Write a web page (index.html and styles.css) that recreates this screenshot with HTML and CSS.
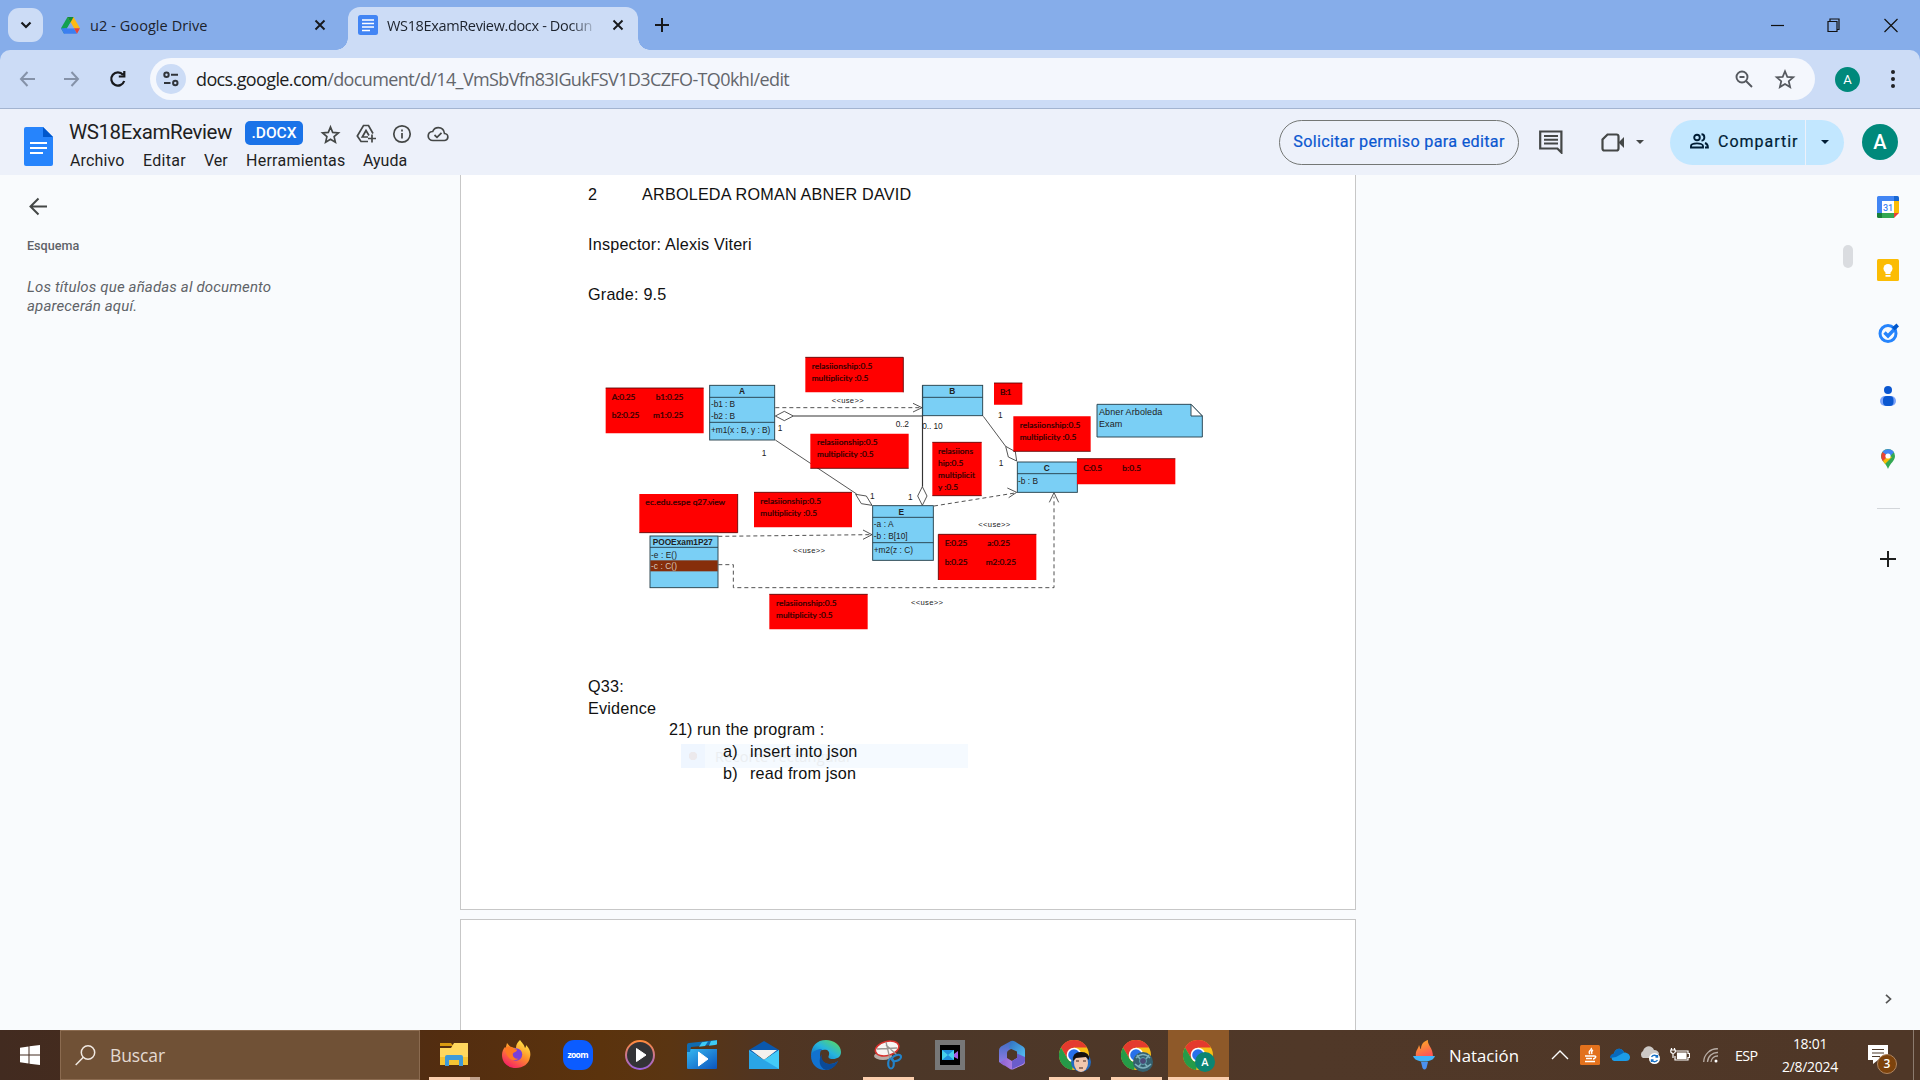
FILE: index.html
```html
<!DOCTYPE html>
<html lang="es">
<head>
<meta charset="utf-8">
<title>WS18ExamReview.docx - Documentos de Google</title>
<link rel="stylesheet" href="styles.css">
</head>
<body>
<svg class="defs" width="0" height="0">
  <defs>
    <symbol id="star" viewBox="0 0 24 24"><path d="M12 3.5l2.5 6.1 6.6.5-5 4.3 1.5 6.4-5.6-3.4-5.6 3.4 1.5-6.4-5-4.3 6.600-.5z" fill="none" stroke="currentColor" stroke-width="1.9"/></symbol>
    <symbol id="close" viewBox="0 0 12 12"><path d="M1.500 1.500l9 9m0-9l-9 9" fill="none" stroke="currentColor" stroke-width="1.900"/></symbol>
    <symbol id="caret" viewBox="0 0 8 4"><path d="M0 0h8l-4 4z" fill="currentColor"/></symbol>
    <symbol id="chrome" viewBox="0 0 30 30"><circle cx="15" cy="15" r="15" fill="#f9bf16"/><path d="M2 7.500A15 15 0 0 1 28 7.500H15l-6.500 11.300z" fill="#e43a2e"/><path d="M2 7.500l6.500 11.300A7.500 7.500 0 0 0 15 22.500L13 30A15 15 0 0 1 2 7.500z" fill="#259b48"/><circle cx="15" cy="15" r="7.300" fill="#fff"/><circle cx="15" cy="15" r="5.800" fill="#2870ea"/></symbol>
    <linearGradient id="edgeA" x1="0" y1="1" x2="1" y2="0"><stop offset="0" stop-color="#0b66c3"/><stop offset=".5" stop-color="#26b4df"/><stop offset="1" stop-color="#63e04a"/></linearGradient>
    <linearGradient id="fox" x1=".8" y1="0" x2=".2" y2="1"><stop offset="0" stop-color="#fff04a"/><stop offset=".45" stop-color="#ff9329"/><stop offset="1" stop-color="#f5156c"/></linearGradient>
    <linearGradient id="blue" x1="0" y1="0" x2="1" y2="1"><stop offset="0" stop-color="#35b8f1"/><stop offset="1" stop-color="#0b54bd"/></linearGradient>
    <linearGradient id="ring" x1="0" y1="0" x2="0" y2="1"><stop offset="0" stop-color="#ff8a3c"/><stop offset="1" stop-color="#9a62dc"/></linearGradient>
    <linearGradient id="flame" x1="0" y1="0" x2=".4" y2="1"><stop offset="0" stop-color="#ffb41f"/><stop offset="1" stop-color="#fb5a55"/></linearGradient>
    <linearGradient id="loopA" x1="0" y1="0" x2="0" y2="1"><stop offset="0" stop-color="#3f6fc4"/><stop offset="1" stop-color="#9a7be6"/></linearGradient>
    <linearGradient id="loopB" x1="0" y1="0" x2="1" y2="1"><stop offset="0" stop-color="#2f6fc0"/><stop offset="1" stop-color="#56c4f6"/></linearGradient>
    <linearGradient id="loopC" x1="0" y1="0" x2="1" y2="0"><stop offset="0" stop-color="#8c5fd0"/><stop offset="1" stop-color="#c79af0"/></linearGradient>
  </defs>
</svg>

<div class="chrome-top">
<div class="tabstrip">
  <div class="tab-search"><svg width="12" height="8" viewBox="0 0 12 8"><path d="M1.500 1.500L6 6l4.500-4.500" fill="none" stroke="#17191d" stroke-width="2.200"/></svg></div>
  <div class="tab idle">
    <svg width="19" height="17" viewBox="0 0 19 17"><path d="M6.500 0h6L9.500 5.500 3 16.500 0 11.300z" fill="#12a150"/><path d="M6.500 0h6L19 11.300h-6z" fill="#fdb913"/><path d="M3.200 11.300H13L16 16.700H3z" fill="#3b7ff0"/><path d="M0 11.300h6L3 16.700z" fill="#3b7ff0"/><path d="M13 11.300h6l-3 5.400z" fill="#ea4335"/><path d="M9.500 5.500L6.200 11.300H12.900z" fill="#84aae8"/><path d="M6.500 0h6l-3 5.500z" fill="#118a3e"/></svg>
    <span class="tab-title t-drive">u2 - Google Drive</span>
    <svg class="x" width="12" height="12"><use href="#close"/></svg>
  </div>
  <div class="tab active">
    <svg width="20" height="20" viewBox="0 0 20 20"><rect width="20" height="20" rx="2.500" fill="#4285f4"/><path d="M4 5h12M4 8.500h12M4 12h12M4 15.500h8" stroke="#fff" stroke-width="1.700"/></svg>
    <span class="tab-title t-docs">WS18ExamReview.docx - Docun</span>
    <svg class="x" width="12" height="12"><use href="#close"/></svg>
  </div>
  <svg class="newtab" width="14" height="14" viewBox="0 0 14 14"><path d="M7 0v14M0 7h14" stroke="#17191d" stroke-width="2"/></svg>
  <svg class="winctl" width="128" height="15" viewBox="0 0 128 15" fill="none" stroke="#111" stroke-width="1.200"><path d="M0 7.500h13"/><path d="M57 3.500h9v10h-9zM59 3.500V1h9v10.500h-2"/><path d="M113.500 1l13 13m0-13l-13 13"/></svg>
</div>

<div class="toolbar">
  <svg class="nav" width="108" height="18" viewBox="0 0 108 18" fill="none" stroke-width="2"><path d="M16 9H2m6.500-7L2 9l6.500 7" stroke="#8592a8"/><path d="M45 9h14m-6.500-7L59 9l-6.500 7" stroke="#8592a8"/><path d="M104 4.800A6.600 6.600 0 1 0 105.200 11M105.300 1v5.500h-5.500" stroke="#17191d" stroke-width="2.200"/></svg>
  <div class="omnibox">
    <div class="site"><svg width="16" height="16" viewBox="0 0 16 16" fill="none" stroke="#30343a" stroke-width="2"><circle cx="3.500" cy="3.800" r="2.200"/><path d="M8 3.800h7M1 12h6.500"/><circle cx="12.300" cy="12" r="2.200"/></svg></div>
    <div class="url"><b>docs.google.com</b>/document/d/14_VmSbVfn83IGukFSV1D3CZFO-TQ0khI/edit</div>
    <svg class="zoomout" width="18" height="18" viewBox="0 0 18 18" fill="none" stroke="#55595f" stroke-width="1.900"><circle cx="7" cy="7" r="5.500"/><path d="M11 11l6 6M4.500 7h5"/></svg>
    <svg class="bm" width="22" height="22"><use href="#star"/></svg>
  </div>
  <div class="avatar sm">A</div>
  <svg class="dots" width="4" height="18" viewBox="0 0 4 18" fill="#202124"><circle cx="2" cy="2" r="2"/><circle cx="2" cy="9" r="2"/><circle cx="2" cy="16" r="2"/></svg>
</div>
</div>

<header class="docs-header">
  <svg class="logo" width="29" height="39" viewBox="0 0 29 39"><path d="M2 0h17l10 10v27a2 2 0 0 1-2 2H2a2 2 0 0 1-2-2V2a2 2 0 0 1 2-2z" fill="#2684fc"/><path d="M19 0l10 10H19z" fill="#0057cc"/><path d="M6 16h17M6 21h17M6 26h13" stroke="#fff" stroke-width="1.900"/></svg>
  <div class="titles">
    <div class="title-row">
      <span class="doc-title">WS18ExamReview</span><span class="badge">.DOCX</span>
      <svg width="21" height="21"><use href="#star"/></svg>
      <svg width="21" height="20" viewBox="0 0 21 20" fill="none" stroke="#444746" stroke-width="1.700"><path d="M12 17.500H5L1.300 12 7.500 1.500h5l4.500 8"/><path d="M12 13H6.300L10 6.500l3 5"/><path d="M16 10.500v8M12 14.500h8"/></svg>
      <svg width="20" height="20" viewBox="0 0 20 20" fill="none" stroke="#444746" stroke-width="1.700"><circle cx="10" cy="10" r="8.200"/><path d="M10 9v5.500M10 5.500v2"/></svg>
      <svg width="22" height="20" viewBox="0 0 22 20" fill="none" stroke="#444746" stroke-width="1.700"><path d="M6 16.500h11.200a3.500 3.500 0 0 0 .3-7C17 6 14.500 3.700 11.300 3.700 8.700 3.700 6.700 5.200 5.700 7.500 3 7.700 1.200 9.700 1.200 12c0 2.500 2 4.500 4.800 4.500z"/><path d="M7.500 11l2.500 2.300 4.500-4.500"/></svg>
    </div>
    <nav class="menu"><span class="m1">Archivo</span><span class="m2">Editar</span><span class="m3">Ver</span><span class="m4">Herramientas</span><span>Ayuda</span></nav>
  </div>
  <div class="request">Solicitar permiso para editar</div>
  <svg class="comment" width="24" height="24" viewBox="0 0 24 24"><path d="M1.200 1.500h21.200v21l-4-4H1.200z" fill="none" stroke="#444746" stroke-width="2.200"/><path d="M5 6h14M5 9.700h14M5 13.500h14" stroke="#444746" stroke-width="2"/></svg>
  <svg class="video" width="24" height="19" viewBox="0 0 24 19"><path d="M6.500 1.500h9q2 0 2 2v12q0 2-2 2h-12q-2 0-2-2v-9z" fill="none" stroke="#444746" stroke-width="2.200"/><path d="M17.500 9.500L23 4v11z" fill="#444746"/></svg>
  <svg class="vcaret" width="8" height="4"><use href="#caret"/></svg>
  <div class="share">
    <div class="share-main"><svg width="19" height="16" viewBox="0 0 19 16" fill="none" stroke="#001d35" stroke-width="1.900"><circle cx="7" cy="4.500" r="2.800"/><path d="M1 14.500v-1.500c0-3.500 12-3.500 12 0v1.500z"/><path d="M11.500 1.300c3.800 0 3.800 6.300 0 6.300M15 10c2 .8 2.900 2 2.900 4.500H15"/></svg><span>Compartir</span></div>
    <div class="share-more"><svg width="8" height="4"><use href="#caret"/></svg></div>
  </div>
  <div class="avatar lg">A</div>
</header>

<main>
  <aside class="outline">
    <svg width="19" height="19" viewBox="0 0 19 19" fill="none" stroke="#444746" stroke-width="2"><path d="M18 9.500H1.500M9.500 1.500l-8 8 8 8"/></svg>
    <h2>Esquema</h2>
    <p>Los títulos que añadas al documento<br>aparecerán aquí.</p>
  </aside>

  <section class="canvas">
    <article class="page first">
      <div class="ghost"><i></i><span>Recorte rectangular</span></div>
      <p class="name"><span>2</span>ARBOLEDA ROMAN ABNER DAVID</p>
      <p class="gap">Inspector: Alexis Viteri</p>
      <p class="gap">Grade: 9.5</p>
      <svg class="diagram" width="660" height="300" viewBox="0 0 1980 900">
        <g class="solid">
          <path d="M640 228H1028" class="grey"/><path d="M586 300L830 462M1210 229L1277 319"/>
          <path d="M1027.500 136V440" stroke-width="3.500"/>
          <path d="M586 228l27-14 27 14-27 14zM1027 440l14 28-14 28-14-28zM827 463l32 5 17 28-32-5zM1277 319l29 16 4 28-25-12z" fill="#fff"/>
        </g>
        <g class="dash"><path d="M586 203H1020M415 589L870 584M415 674H460V743H1422V470M1062 498L1305 459"/></g>
        <g class="solid"><path d="M999 190l27 13-27 13M849 570l27 14-27 14M1282 444l28 13-24 16M1408 487l14-29 14 29"/></g>
        <g class="box">
          <rect x="389" y="136" width="195" height="164"/><path d="M389 172H584M389 247H584"/>
          <rect x="1028" y="136" width="180" height="91"/><path d="M1028 172H1208"/>
          <rect x="1312" y="366" width="180" height="91"/><path d="M1312 401H1492"/>
          <rect x="878" y="497" width="182" height="164"/><path d="M878 532H1060M878 608H1060"/>
          <rect x="210" y="588" width="204" height="155"/><path d="M210 622H414"/>
          <path d="M1551 193H1833L1867 228V291H1551z"/><path d="M1833 193V228H1867z" fill="#fff"/>
        </g>
        <rect x="211" y="661" width="202" height="33" fill="#862e0b"/>
        <g class="red">
          <path d="M77 144h294v136H77zM676 52h294v105H676zM691 281h295v104H691zM522 457h294v105H522zM178 462h295v116H178zM568 763h295v105H568zM1057 307h148v160h-148zM1242 129h85v65h-85zM1300 229h232v105h-232zM1491 356h295v77h-295zM1075 583h294v137h-294z"/>
          <path class="edge" d="M77 144h294M676 52h294v105M691 385h295M522 457h294M178 578h295v-116M568 763h295M1057 307h148M1057 467h148M1242 129h85M1300 334h232M1491 356h295M1075 720V583h294"/>
        </g>
        <g class="uml">
          <text x="486" y="163" class="b">A</text><text x="393" y="202" textLength="72">-b1 : B</text><text x="393" y="236" textLength="72">-b2 : B</text><text x="393" y="279" textLength="178">+m1(x : B, y : B)</text>
          <text x="1117" y="162" class="b">B</text><text x="1400" y="392" class="b">C</text><text x="1314" y="431" textLength="60">-b : B</text>
          <text x="964" y="524" class="b">E</text><text x="881" y="562" textLength="60">-a : A</text><text x="881" y="597" textLength="102">-b : B[10]</text><text x="881" y="640" textLength="118">+m2(z : C)</text>
          <text x="308" y="615" class="b" textLength="180">POOExam1P27</text><text x="213" y="654" textLength="78">-e : E()</text><text x="213" y="688" textLength="78" class="pale">-c : C()</text>
          <text x="1557" y="226" textLength="190" class="note">Abner Arboleda</text><text x="1557" y="262" textLength="70" class="note">Exam</text>
          <text x="593" y="272">1</text><text x="545" y="347">1</text><text x="870" y="476">1</text><text x="984" y="480">1</text><text x="1254" y="233">1</text><text x="1256" y="379">1</text>
          <text x="947" y="262" textLength="40">0..2</text><text x="1027" y="267" textLength="61">0.. 10</text>
          <g class="use"><text x="755" y="190" textLength="96">&lt;&lt;use&gt;&gt;</text><text x="639" y="640" textLength="96">&lt;&lt;use&gt;&gt;</text><text x="1195" y="560" textLength="96">&lt;&lt;use&gt;&gt;</text><text x="993" y="795" textLength="96">&lt;&lt;use&gt;&gt;</text></g>
        </g>
        <g class="score">
          <text x="95" y="179" textLength="71">A:0.25</text><text x="227" y="179" textLength="83">b1:0.25</text><text x="95" y="234" textLength="83">b2:0.25</text><text x="219" y="234" textLength="91">m1:0.25</text>
          <text x="695" y="88" textLength="182">relasiionship:0.5</text><text x="695" y="124" textLength="170">multiplicity :0.5</text>
          <text x="711" y="316" textLength="182">relasiionship:0.5</text><text x="711" y="352" textLength="170">multiplicity :0.5</text>
          <text x="541" y="492" textLength="182">relasiionship:0.5</text><text x="541" y="528" textLength="170">multiplicity :0.5</text>
          <text x="588" y="798" textLength="182">relasiionship:0.5</text><text x="588" y="834" textLength="170">multiplicity :0.5</text>
          <text x="1319" y="265" textLength="182">relasiionship:0.5</text><text x="1319" y="300" textLength="170">multiplicity :0.5</text>
          <text x="196" y="496" textLength="135">ec.edu.espe</text><text x="338" y="496" textLength="97">q27.view</text>
          <text x="1074" y="342" textLength="105">relasiions</text><text x="1074" y="378" textLength="76">hip:0.5</text><text x="1074" y="414" textLength="111">multiplicit</text><text x="1074" y="449" textLength="60">y :0.5</text>
          <text x="1260" y="165" textLength="34">B:1</text><text x="1510" y="392" textLength="56">C:0.5</text><text x="1627" y="392" textLength="56">b:0.5</text>
          <text x="1094" y="619" textLength="68">E:0.25</text><text x="1222" y="619" textLength="68">a:0.25</text><text x="1094" y="674" textLength="69">b:0.25</text><text x="1217" y="674" textLength="91">m2:0.25</text>
        </g>
      </svg>
      <p>Q33:</p>
      <p>Evidence</p>
      <p class="li1"><span>21)</span>run the program :</p>
      <p class="li2"><span>a)</span>insert into json</p>
      <p class="li2"><span>b)</span>read from json</p>
    </article>
    <article class="page second"></article>
  </section>

  <div class="scroll"><div class="thumb"></div></div>

  <aside class="rail">
    <svg width="22" height="22" viewBox="0 0 22 22"><rect width="22" height="22" rx="1.500" fill="#fff"/><path d="M0 1.500Q0 0 1.500 0H17v5H5v12H0z" fill="#4285f4"/><path d="M17 0h3.500Q22 0 22 1.500V5h-5z" fill="#1967d2"/><path d="M17 5h5v12h-5z" fill="#fbbc04"/><path d="M5 17h12v5H5z" fill="#34a853"/><path d="M0 17h5v5H1.500Q0 22 0 20.500z" fill="#188038"/><path d="M17 17h5l-5 5z" fill="#ea4335"/><text x="11" y="14.800" text-anchor="middle" class="cal">31</text></svg>
    <svg width="22" height="22" viewBox="0 0 22 22"><rect width="22" height="22" rx="1.500" fill="#fbbc04"/><circle cx="11" cy="9.500" r="4.500" fill="#fff"/><path d="M8.500 12h5v3h-5zM8.500 16h5v1.800h-5z" fill="#fff"/></svg>
    <svg width="22" height="22" viewBox="0 0 22 22"><circle cx="11" cy="11.500" r="8" fill="none" stroke="#2684fc" stroke-width="3"/><path d="M7.500 10.500l3.500 3.500 8-8.500" fill="none" stroke="#2684fc" stroke-width="3.400"/><path d="M15 5.500l4.500-4 2.500 3-4.500 4z" fill="#0057cc"/></svg>
    <svg width="22" height="22" viewBox="0 0 22 22"><circle cx="11" cy="5" r="4" fill="#0b57d0"/><rect x="3" y="11" width="16" height="10" rx="5" fill="#7ba3fa"/><rect x="6" y="11" width="10.500" height="10" rx="4" fill="#0b57d0"/></svg>
    <svg width="22" height="22" viewBox="0 0 22 22"><path d="M4 8a7 7 0 0 1 14 0c0 5-5 7-7 13C9 15 4 13 4 8z" fill="#34a853"/><path d="M5.500 4A7 7 0 0 1 17 4.300L8 13z" fill="#4285f4"/><path d="M5.500 4L11 8l-5 5.500C4 10.500 3.500 7 5.500 4z" fill="#ea4335"/><path d="M11 8l4 1-7 7-2-3z" fill="#fbbc04"/><circle cx="11" cy="8" r="2.600" fill="#fff"/></svg>
    <hr>
    <svg width="16" height="16" viewBox="0 0 16 16"><path d="M8 0v16M0 8h16" stroke="#1f1f1f" stroke-width="2"/></svg>
    <svg class="collapse" width="7" height="10" viewBox="0 0 7 10"><path d="M1 .8L5.500 5 1 9.200" fill="none" stroke="#555" stroke-width="1.700"/></svg>
  </aside>
</main>

<footer class="taskbar">
  <div class="start"><svg width="20" height="20" viewBox="0 0 20 20" fill="#fff"><path d="M0 2.700l8.500-1.200v8H0zM9.500 1.300L20 0v9.500H9.500zM0 10.500h8.500v8L0 17.300zM9.500 10.500H20V20L9.500 18.700z"/></svg></div>
  <div class="search"><svg width="21" height="21" viewBox="0 0 21 21" fill="none" stroke="#f1e9e2" stroke-width="1.500"><circle cx="13" cy="7.500" r="6.700"/><path d="M8.300 12.300L.7 20"/></svg><span>Buscar</span></div>
  <div class="apps">
    <div class="app open multi"><svg width="30" height="30" viewBox="0 0 30 30"><path d="M1 3h11l2.500 3H1z" fill="#d99a10"/><path d="M1 8h11l3-5h14v22H1z" fill="#ffd75e"/><path d="M1 17h28v8H1z" fill="#f5c433"/><path d="M6 26V17q0-2 2-2h14q2 0 2 2v9h-4v-6H10v6z" fill="#3e9ad9"/></svg></div>
    <div class="app"><svg width="30" height="30" viewBox="0 0 30 30"><path d="M19 0c2 3 4 4 5 8 1-1 1-2 1-3 4 4 5 8 4 12-1 7-7 11-14 11C7 28 1 23 1 15c0-3 1-6 3-8l.5 1.500L6 3l4 4.500 5 .5c0-4 2-6 4-8z" fill="url(#fox)"/><circle cx="15" cy="14.500" r="6.200" fill="#7a40d8"/><path d="M4 8c3-2 7-2 9 1l3 .5c0 3-3 2-4 4-1 3 2 6 6 5-6 4-13 0-14-10.500z" fill="#ff7a22"/></svg></div>
    <div class="app"><svg width="30" height="30" viewBox="0 0 30 30"><rect width="30" height="30" rx="11" fill="#0b5cff"/><text x="15" y="17.500" text-anchor="middle" class="zoomtxt" textLength="21">zoom</text></svg></div>
    <div class="app"><svg width="30" height="30" viewBox="0 0 30 30"><circle cx="15" cy="15" r="14" fill="#333336" stroke="url(#ring)" stroke-width="2"/><path d="M11.500 8.500L21 15l-9.500 6.500z" fill="#fff" stroke="#fff" stroke-linejoin="round"/></svg></div>
    <div class="app"><svg width="30" height="30" viewBox="0 0 30 30"><path d="M0 9h30v19q0 1-1 1H1q-1 0-1-1z" fill="url(#blue)"/><path d="M0 5q0-2 2-2L30 0v4.500L4 7l-1 5H0z" fill="#0f6bb0"/><path d="M15 2.300l6-.8-3 4.500-6 .8zM24 1l6-.8v4L28 5l-6 .8z" fill="#3ecbf5"/><path d="M11.500 12l9.500 7-9.500 7z" fill="#fff" stroke="#fff" stroke-linejoin="round"/></svg></div>
    <div class="app"><svg width="30" height="30" viewBox="0 0 30 30"><path d="M0 10L15 1l15 9v5H0z" fill="#0a58ad"/><path d="M2 10h26l-13 10z" fill="#f3f1ee"/><path d="M0 10l15 10L30 10v19H0z" fill="#35b2ee"/><path d="M15 20L30 29V10z" fill="#43cbf8"/><path d="M13 18.700l2 1.300L30 29H0V12z" fill="#209ae0" opacity=".55"/></svg></div>
    <div class="app"><svg width="30" height="30" viewBox="0 0 30 30"><path d="M0 16C0 6 6 0 15 0c8 0 15 5 15 12 0 5-4 7-8 7-5 0-5-2-4-4 1-4-2-6-6-5C6 10 2 13 0 16z" fill="url(#edgeA)"/><path d="M0 16C1 11 6 9 11 9c-4 4-2 14 6 15 4 .5 7-1 10-3-3 6-8 9-13 9C6 30 0 24 0 16z" fill="#1272cf"/><path d="M11 14c-2 6 3 10 8 10 4 0 6-2 8-3-2 6-8 9-12 9-7-2-8-11-4-16z" fill="#0a4a98"/></svg></div>
    <div class="app open"><svg width="30" height="30" viewBox="0 0 30 30"><ellipse cx="10" cy="16" rx="9" ry="4" fill="#b5aca6"/><ellipse cx="14" cy="8.500" rx="12" ry="7" transform="rotate(-15 14 8)" fill="#f8f5f3" stroke="#d9322e" stroke-width="1.600"/><path d="M4 9l20-1M13 2l4 17M24 15L13 5" stroke="#9b9693" stroke-width="1.300"/><g fill="none" stroke="#2383c9" stroke-width="2.200"><ellipse cx="23.500" cy="18" rx="2.800" ry="4.800" transform="rotate(65 23.500 18)"/><ellipse cx="18" cy="23.500" rx="2.800" ry="5"/></g></svg></div>
    <div class="app"><svg width="30" height="30" viewBox="0 0 30 30"><rect width="30" height="30" fill="#777"/><rect x="5" y="5" width="20" height="20" fill="#000"/><path d="M7 10h12v10H7z" fill="#1f8fdc"/><path d="M7 10l6 5 6-5v10l-6-5-6 5z" fill="#46d1ec"/><path d="M19 14l4-3v8l-4-2z" fill="#a45fe8"/></svg></div>
    <div class="app"><svg width="30" height="30" viewBox="0 0 30 30"><path d="M14 1L4 6.500Q2 8 2 10v12l5 3.500 3-1.500v-11q0-2 2-3l3-1.500V1z" fill="url(#loopA)"/><path d="M14 1q2-.5 4 .5l8 5q2 1 2 3.500v9l-8-4.500v-3L12 8z" fill="url(#loopB)"/><path d="M3 22.500l7-4.500 5 3 5-3 8 1v3q0 2-2 3l-9 4q-2 1-4 0z" fill="url(#loopC)"/><path d="M20 13.500l8 3.500v4q0 2-2 3l-11 5v-8l5-3z" fill="#6a5ccb"/></svg></div>
    <div class="app open"><svg width="32" height="32" viewBox="0 0 32 32"><use href="#chrome" width="30" height="30"/><circle cx="22" cy="22" r="10" fill="#236bc0"/><ellipse cx="22" cy="23" rx="7" ry="9" fill="#f0c7ae"/><path d="M14 21q-1-9 8-9t8 8l-3-3-10 1z" fill="#16110f"/><path d="M17 21h3M24 21h3M20 28h4" stroke="#40251c" stroke-width="1.200"/></svg></div>
    <div class="app open"><svg width="32" height="32" viewBox="0 0 32 32"><use href="#chrome" width="30" height="30"/><circle cx="22" cy="22" r="10" fill="#35606f"/><path d="M15 18q7-7 14 0M14 24q8 8 16 0M16 15l3 4M28 15l-3 4M17 27l3-3M27 27l-3-3" fill="none" stroke="#7eb1bd" stroke-width="1.500"/><circle cx="22" cy="21" r="3.500" fill="#4c4b78" stroke="#5aa4ab"/></svg></div>
    <div class="app open current"><svg width="32" height="32" viewBox="0 0 32 32"><use href="#chrome" width="30" height="30"/><circle cx="22" cy="22" r="10" fill="#0a8573"/><text x="22" y="26" text-anchor="middle" class="profile">A</text></svg></div>
  </div>
  <div class="weather"><svg width="22" height="30" viewBox="0 0 22 30"><path d="M3 17C2 10 5 10 6 5c1 2 1 4 2 4 0-5 3-8 7-9-1 5 5 7 5 17z" fill="url(#flame)"/><path d="M0 16h22q-1 4-8 5.500H8Q1 20 0 16z" fill="#42b4fa"/><path d="M8 22h7l-1.500 6q-2 3-4 0z" fill="#4b91ef"/></svg><span>Natación</span></div>
  <div class="tray">
    <svg width="18" height="10" viewBox="0 0 18 10"><path d="M1 9l8-8 8 8" fill="none" stroke="#fff" stroke-width="1.400"/></svg>
    <svg class="java" width="20" height="20" viewBox="0 0 20 20"><rect width="20" height="20" rx="1.500" fill="#e2711d"/><path d="M11 3c2 2-4 3-1 6M13 5c-2 1-2 2-1 4M5 11h9q3 0 1 2-1 1-2 1M6 13.500h6M5 16.500h10" fill="none" stroke="#fff" stroke-width="1.400"/></svg>
    <svg width="20" height="14" viewBox="0 0 20 14"><path d="M4 13a4 4 0 0 1 0-7.500C5 0 12-1 14 4.500c4 0 6 2.500 6 5S18 13 16 13z" fill="#1b9ce8"/><path d="M4 5.500C5 0 12-1 14 4.500L6 9 0 10q0-4 4-4.500z" fill="#0869bc"/></svg>
    <svg class="sync" width="20" height="18" viewBox="0 0 20 18"><path d="M3 12a4 4 0 0 1 0-7C5-1 12-1 14 4c3 0 5 2 5 4l-5 4z" fill="#cdc9c6"/><circle cx="14.500" cy="12.500" r="5.500" fill="#fff"/><path d="M11.500 11a3.500 3.500 0 0 1 6 0m0-2v2h-2M17.500 14a3.500 3.500 0 0 1-6 0m0 2v-2h2" fill="none" stroke="#1771c6" stroke-width="1.400"/></svg>
    <svg width="20" height="14" viewBox="0 0 20 14" fill="none" stroke="#fff" stroke-width="1.200"><path d="M6 3h12v2.500h1.500v4H18V12H5V8"/><path d="M7.500 5h8.500v5.500H7.500z" fill="#fff"/><path d="M1.500 0v2M4.500 0v2M.8 2h4.500v2q-2 3-4.500 0zM3 6v4"/></svg>
    <svg class="wifi" width="15" height="15" viewBox="0 0 15 15" fill="none" stroke="#b9aea6" stroke-width="1.300"><path d="M.7 14A13.500 13.500 0 0 1 15 .8M4.500 14A10 10 0 0 1 15 4.500M8 14a6.500 6.500 0 0 1 7-6"/><circle cx="13" cy="13" r="1.500" fill="#fff" stroke="none"/></svg>
    <span class="lang">ESP</span>
  </div>
  <div class="clock"><span>18:01</span><span>2/8/2024</span></div>
  <div class="notif"><svg width="20" height="20" viewBox="0 0 20 20"><path d="M0 0h20v15H10l-5 4v-4H0z" fill="#fff"/><path d="M4 4.500h12M4 8h12M4 11.500h8" stroke="#4c3829" stroke-width="1.200"/></svg><span>3</span></div>
  <div class="peek"></div>
</footer>
</body>
</html>
```
FILE: styles.css
```css
* { box-sizing: border-box; }
body { margin: 0; width: 1920px; height: 1080px; overflow: hidden; display: flex; flex-direction: column; font-family: Roboto, sans-serif; color: #1f1f1f; background: #f9fbfd; }
svg { flex: none; display: block; }
.defs { position: absolute; }
p, h2 { margin: 0; }
span { white-space: pre; }

/* browser tabs */
.chrome-top { flex: none; background: #86adea; }
.tabstrip { height: 50px; display: flex; align-items: center; padding-left: 8px; font-family: "Open Sans", sans-serif; }
.tab-search { width: 35px; height: 34px; border-radius: 11px; background: #ccdcf6; display: flex; align-items: center; justify-content: center; }
.tab { display: flex; align-items: center; font-size: 14.500px; color: #1c222c; }
.tab .x { margin-left: auto; color: #17191d; }
.idle { width: 293px; padding: 0 10px 0 18px; margin-right: 12px; }
.tab-title { margin-left: 10px; overflow: hidden; }
.t-drive { letter-spacing: .07px; }
.active { position: relative; align-self: flex-end; width: 290px; height: 43px; padding: 0 14px 7px 10px; background: #ccdcf6; border-radius: 12px 12px 0 0; }
.active::before, .active::after { content: ""; position: absolute; bottom: 0; width: 12px; height: 12px; }
.active::before { left: -12px; background: radial-gradient(circle at 0 0, transparent 11.500px, #ccdcf6 12px); }
.active::after { right: -12px; background: radial-gradient(circle at 100% 0, transparent 11.500px, #ccdcf6 12px); }
.t-docs { width: 209px; margin-left: 9px; letter-spacing: -.35px; -webkit-mask-image: linear-gradient(90deg, #000 88%, transparent 101%); }
.newtab { margin-left: 17px; }
.winctl { margin: 0 21px 0 auto; }

/* address bar */
.toolbar { height: 59px; display: flex; align-items: center; background: #ccdcf6; border-bottom: 1px solid #a3b4d0; border-radius: 10px 10px 0 0; padding-left: 19px; }
.omnibox { width: 1665px; height: 42px; margin-left: 23px; border-radius: 21px; background: #f4f7fd; display: flex; align-items: center; padding: 0 19px 0 6px; }
.site { width: 30px; height: 30px; border-radius: 50%; background: #ccdcf6; display: flex; align-items: center; justify-content: center; }
.url { margin-left: 10px; font: 18px "Open Sans", sans-serif; letter-spacing: -.62px; color: #63666c; white-space: nowrap; }
.url b { font-weight: 400; color: #1c1e22; }
.zoomout { margin-left: auto; }
.bm { margin-left: 21px; color: #55595f; }
.avatar { border-radius: 50%; background: #00897b; color: #fff; display: flex; align-items: center; justify-content: center; }
.sm { width: 25px; height: 25px; margin-left: 20px; font-size: 13px; }
.dots { margin-left: 31px; }

/* document header */
.docs-header { height: 66px; flex: none; display: flex; align-items: center; background: #edf1fa; padding-left: 24px; }
.logo { margin-top: 8px; }
.titles { margin-left: 16px; width: 1210px; height: 66px; padding-top: 9px; }
.title-row { display: flex; align-items: center; height: 30px; color: #444746; }
.doc-title { width: 176px; margin-top: -2px; font-size: 20.500px; color: #1f1f1f; letter-spacing: -.42px; }
.badge { width: 58px; height: 24px; margin: -1px 17px 0 0; border-radius: 5px; background: #1a73e8; color: #fff; font-size: 15.500px; font-weight: 500; display: flex; align-items: center; justify-content: center; }
.title-row svg { margin-top: 2px; }
.title-row svg + svg { margin-left: 15px; }
.menu { display: flex; font-size: 16px; line-height: 22px; margin: 2px 0 0 1px; }
.menu .m1 { width: 73px; letter-spacing: .15px; } .menu .m2 { width: 61px; letter-spacing: .3px; } .menu .m3 { width: 42px; } .menu .m4 { width: 117px; letter-spacing: .25px; }
.request { width: 240px; height: 45px; padding-bottom: 2px; border: 1px solid #747775; border-radius: 23px; color: #0b57d0; font-size: 16.200px; letter-spacing: .3px; -webkit-text-stroke: .2px #0b57d0; display: flex; align-items: center; justify-content: center; white-space: nowrap; }
.comment { margin-left: 20px; }
.video { margin-left: 38px; }
.vcaret { margin-left: 11px; color: #444746; }
.share { display: flex; margin-left: 26px; height: 45px; color: #001d35; font-size: 16px; }
.share-main { width: 135px; padding-bottom: 2px; background: #c2e7ff; border-radius: 23px 0 0 23px; display: flex; align-items: center; padding-left: 20px; gap: 9px; letter-spacing: .98px; -webkit-text-stroke: .2px #001d35; }
.share-more { width: 38px; margin-left: 1px; background: #c2e7ff; border-radius: 0 23px 23px 0; display: flex; align-items: center; justify-content: center; }
.lg { width: 36px; height: 36px; margin-left: 18px; font-size: 20px; font-weight: 500; }

/* editor */
main { height: 855px; flex: none; display: flex; background: #f9fbfd; }
.outline { width: 460px; flex: none; padding: 22px 0 0 27px; color: #5f6368; }
.outline svg { margin-left: 2px; }
.outline h2 { margin-top: 21px; font-size: 12.600px; line-height: 18px; font-weight: 500; }
.outline p { margin-top: 22px; font-size: 15px; line-height: 19px; font-style: italic; letter-spacing: .15px; padding-top: 1px; }
.canvas { width: 1383px; flex: none; }
.page { position: relative; width: 896px; background: #fff; border: 1px solid #c7c7c7; }
.first { height: 735px; border-top: 0; padding: 8px 0 0 127px; font: 16.200px/21.700px "Liberation Sans", Arial, sans-serif; letter-spacing: .2px; color: #111; }
.first p { position: relative; }
.second { height: 111px; margin-top: 9px; border-bottom: 0; }
.name { display: flex; line-height: 22px; }
.name span { width: 54px; }
.gap { margin-top: 28px; line-height: 22px; }
.diagram { margin: 35px 0 36px -8px; letter-spacing: 0; }
.li1 { display: flex; padding-left: 81px; } .li1 span { width: 28px; letter-spacing: 0; }
.li2 { display: flex; padding-left: 135px; } .li2 span { width: 27px; }
.ghost { position: absolute; left: 220px; top: 569px; width: 287px; height: 24px; background: #f5faff; display: flex; align-items: center; font: 14.500px "Open Sans", sans-serif; color: #ebeef1; }
.ghost i { width: 24px; height: 24px; background: radial-gradient(circle, #ece9ec 4px, #eff6ff 4.500px); margin-right: 10px; }
.solid { fill: none; stroke: #333; stroke-width: 2.500; }
.grey { stroke: #777; stroke-width: 4; }
.dash { fill: none; stroke: #444; stroke-width: 2.800; stroke-dasharray: 12 9; }
.box { fill: #7acff5; stroke: #27414c; stroke-width: 2.800; }
.red { fill: #f00; }
.red .edge { fill: none; stroke: #500; stroke-width: 2.500; }
.uml { font-family: "Liberation Sans", Arial, sans-serif; font-size: 25px; fill: #222; }
.uml .b { font-weight: 700; text-anchor: middle; }
.uml .pale { fill: #d5c8bf; }
.uml .note { font-size: 27px; }
.uml .use { font-size: 23px; }
.score { font-family: Lato, sans-serif; font-size: 25px; fill: #2c0000; stroke: #2c0000; stroke-width: .7; }
.scroll { width: 10px; flex: none; padding-top: 70px; }
.thumb { height: 23px; border-radius: 5px; background: #dadce0; }
.rail { width: 67px; flex: none; padding: 21px 0 26px 3px; display: flex; flex-direction: column; align-items: center; gap: 41px; }
.rail hr { width: 23px; height: 1px; margin: -3px 0 1px; border: 0; background: #d3d6da; }
.rail .collapse { margin-top: auto; }
.cal { font: 500 9px Roboto, sans-serif; fill: #4285f4; }

/* Windows taskbar */
.taskbar { height: 50px; flex: none; display: flex; align-items: center; color: #fff; font-family: "Open Sans", "Noto Sans", sans-serif; background: linear-gradient(90deg, #422b20 0, #4b2d1a 320px, #532d10 440px, #5b330d 600px, #5a3512 670px, #513521 760px, #4c3728 900px, #503828 1300px, #4f3727 1900px); }
.start { width: 60px; padding-left: 20px; }
.search { width: 360px; height: 50px; border: 1px solid #8b6b50; background: #705136; display: flex; align-items: center; padding-left: 14px; font-size: 17.500px; color: #e4dad2; }
.search span { margin-left: 14px; letter-spacing: -.1px; }
.apps { display: flex; margin-left: 3px; }
.app { width: 62px; height: 50px; display: flex; align-items: center; justify-content: center; }
.app.open { background: linear-gradient(#fbcfae, #fbcfae) 50% 100% / 51px 3px no-repeat; }
.app.multi { background: linear-gradient(90deg, #fbcfae 41px, #c0a18b 41px) 50% 100% / 51px 3px no-repeat; }
.app.current { background: linear-gradient(#fbcfae, #fbcfae) 50% 100% / 61px 3px no-repeat, linear-gradient(#8e5929, #8e5929) 50% 0 / 61px 50px no-repeat; }
.app svg[width="32"] { margin: 2px 0 0 2px; }
.zoomtxt { font: 700 8.500px "Open Sans", sans-serif; fill: #fff; }
.profile { font: 500 11px Roboto, sans-serif; fill: #fff; }
.weather { display: flex; align-items: center; margin-left: 184px; width: 138px; font-size: 16.800px; }
.weather span { margin-left: 14px; }
.tray { display: flex; align-items: center; gap: 10px; width: 221px; }
.java { margin-left: 1px; }
.wifi { margin-left: 3px; }
.lang { margin-left: 7px; font-size: 14.300px; letter-spacing: -.6px; }
.clock { width: 76px; display: flex; flex-direction: column; align-items: center; font-size: 14px; line-height: 23px; letter-spacing: -.3px; }
.notif { position: relative; margin-left: 20px; width: 45px; }
.notif span { position: absolute; left: 9px; top: 9px; width: 20px; height: 20px; border-radius: 50%; border: 1px solid #b08560; background: #7d430c; font-size: 12px; line-height: 18px; font-weight: 600; text-align: center; }
.peek { width: 1px; height: 50px; background: #8c7b6e; }
```
